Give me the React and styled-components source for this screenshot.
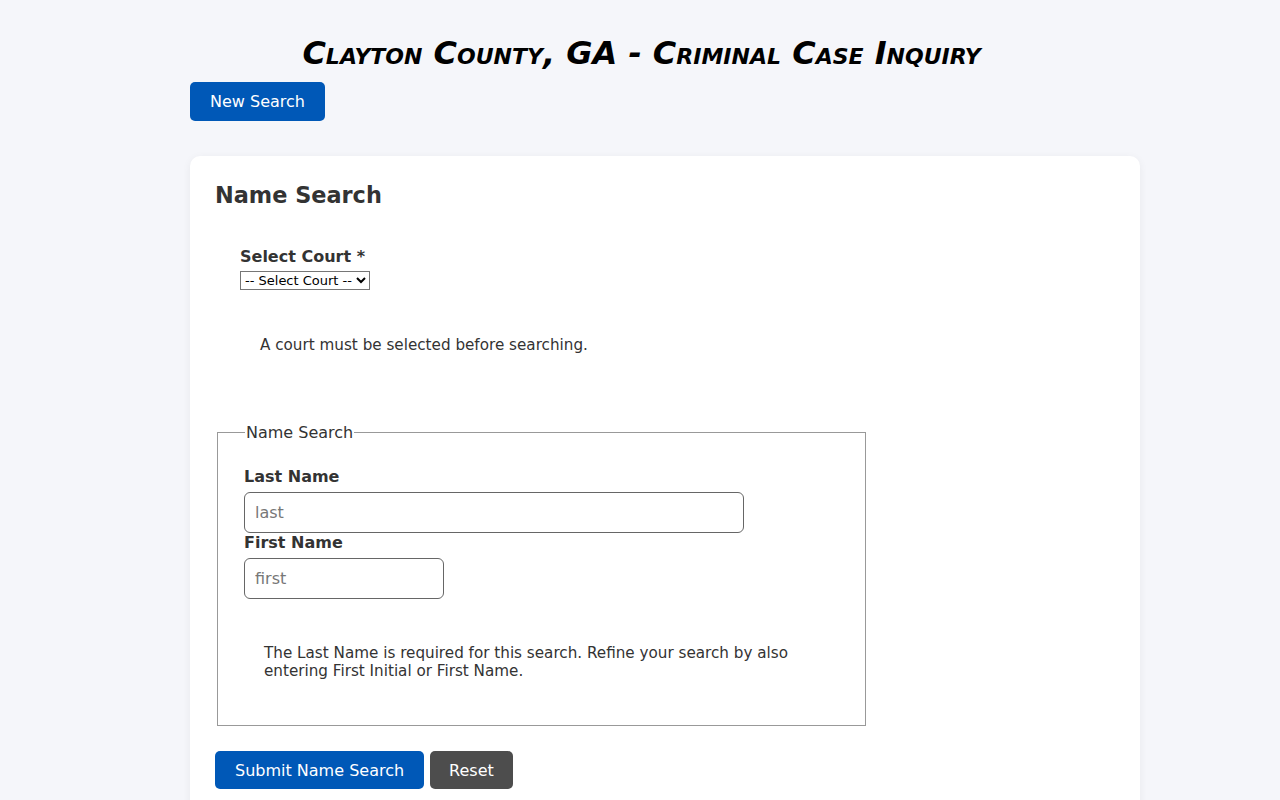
import React from "react";
import styled, { createGlobalStyle } from "styled-components";

const Global = createGlobalStyle`
  html, body { margin: 0; padding: 0; }
  body {
    background: #f5f6fa;
    font-family: "DejaVu Sans", Verdana, sans-serif;
    color: #333;
    font-size: 16px;
  }
`;

const Page = styled.div`
  width: 1000px;
  margin: 0 auto;
  padding-top: 30px;
`;

const Title = styled.h1`
  margin: 0 0 8px;
  padding-left: 3px;
  text-align: center;
  font-family: "DejaVu Sans", Verdana, sans-serif;
  font-size: 32px;
  font-weight: bold;
  font-style: italic;
  font-variant: small-caps;
  color: #000;
  line-height: 46px;
  height: 44px;
`;

const Inner = styled.div`
  margin-left: 50px;
`;

const Button = styled.button`
  font-family: "DejaVu Sans", Verdana, sans-serif;
  font-size: 16px;
  color: #fff;
  background: ${(p) => (p.$variant === "gray" ? "#4d4d4d" : "#0058b7")};
  border: none;
  border-radius: 5px;
  height: ${(p) => (p.$tall ? "39px" : "38px")};
  padding: 0 ${(p) => (p.$variant === "gray" ? "19px" : "20px")};
  cursor: pointer;
`;

const Card = styled.div`
  margin-top: 35px;
  background: #fff;
  border-radius: 10px;
  box-shadow: 0 2px 8px rgba(0, 0, 0, 0.06);
  padding: 24px 25px 25px;
`;

const CardTitle = styled.h2`
  margin: 0;
  font-size: 22.4px;
  font-weight: bold;
  color: #333;
  line-height: 30px;
`;

const CourtBlock = styled.div`
  padding: 37px 25px 0;
  display: flex;
  flex-direction: column;
  align-items: flex-start;
`;

const Label = styled.label`
  display: block;
  font-weight: bold;
  font-size: 16px;
  line-height: 19px;
  color: #333;
`;

const CourtLabel = styled(Label)`
  margin-bottom: 5px;
`;

const Select = styled.select`
  font-family: "DejaVu Sans", Verdana, sans-serif;
  font-size: 13px;
  height: 19px;
  width: 130px;
  padding: 0;
  border: 1px solid #767676;
  border-radius: 0;
  background: #fff;
  color: #000;
`;

const Note = styled.p`
  margin: ${(p) => p.$margin};
  font-size: 15.2px;
  line-height: 18px;
  color: #333;
`;

const Fieldset = styled.fieldset`
  margin: 69px 0 0 2px;
  width: 649px;
  box-sizing: border-box;
  border: 1px solid #999;
  padding: 25px 26px 45px;
`;

const Legend = styled.legend`
  font-size: 16px;
  color: #333;
  padding: 0 1px;
  margin-left: 1px;
`;

const FieldLabel = styled(Label)`
  margin-bottom: 6px;
`;

const Input = styled.input`
  display: block;
  box-sizing: border-box;
  width: ${(p) => p.$w};
  height: 41px;
  border: 1px solid #666;
  border-radius: 6px;
  padding: 0 10px;
  font-family: "DejaVu Sans", Verdana, sans-serif;
  font-size: 16px;
  color: #333;
  &::placeholder { color: #777; }
`;

const Actions = styled.div`
  display: flex;
  gap: 6px;
  margin-top: 25px;
`;

export default function App() {
  return (
    <>
      <Global />
      <Page>
        <Title>Clayton County, GA - Criminal Case Inquiry</Title>
        <Inner>
          <Button $tall>New Search</Button>
          <Card>
            <CardTitle>Name Search</CardTitle>
            <CourtBlock>
              <CourtLabel htmlFor="court">Select Court *</CourtLabel>
              <Select id="court" defaultValue="">
                <option value="">-- Select Court --</option>
              </Select>
            </CourtBlock>
            <Note $margin="46px 0 0 45px">A court must be selected before searching.</Note>
            <Fieldset>
              <Legend>Name Search</Legend>
              <FieldLabel htmlFor="last">Last Name</FieldLabel>
              <Input id="last" placeholder="last" $w="500px" />
              <FieldLabel htmlFor="first">First Name</FieldLabel>
              <Input id="first" placeholder="first" $w="200px" />
              <Note $margin="45px 0 0 20px">
                The Last Name is required for this search. Refine your search by also
                <br />
                entering First Initial or First Name.
              </Note>
            </Fieldset>
            <Actions>
              <Button>Submit Name Search</Button>
              <Button $variant="gray">Reset</Button>
            </Actions>
          </Card>
        </Inner>
      </Page>
    </>
  );
}
